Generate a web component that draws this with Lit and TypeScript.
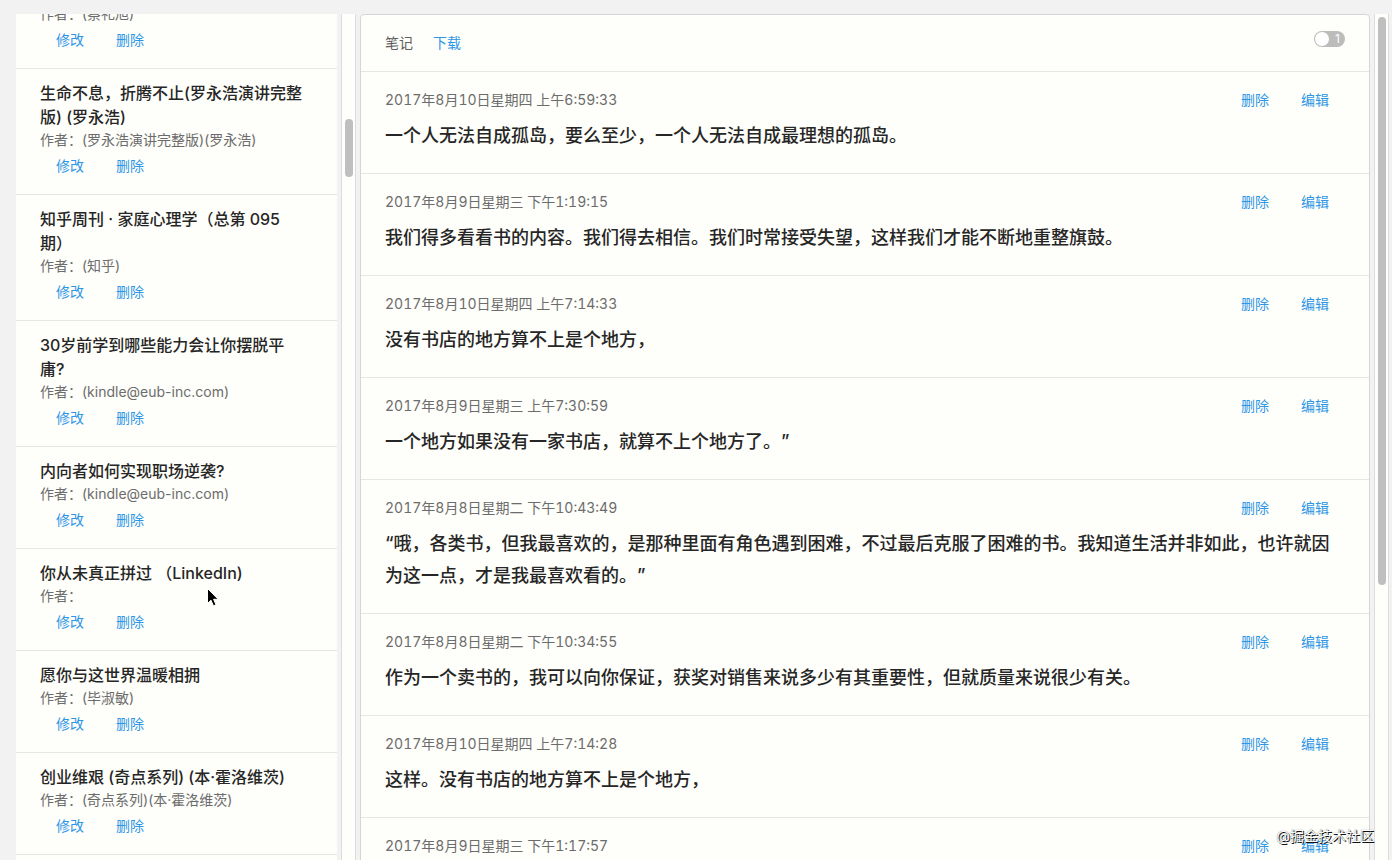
import { LitElement, html, css } from "lit";
import { customElement, property, query } from "lit/decorators.js";

interface Book {
  title: string;
  author: string;
}

interface Note {
  date: string;
  text: string;
}

const BOOKS: Book[] = [
  { title: "", author: "(蔡礼旭)" },
  { title: "生命不息，折腾不止(罗永浩演讲完整\n版) (罗永浩)", author: "(罗永浩演讲完整版)(罗永浩)" },
  { title: "知乎周刊 · 家庭心理学（总第 095\n期）", author: "(知乎)" },
  { title: "30岁前学到哪些能力会让你摆脱平\n庸?", author: "(kindle@eub-inc.com)" },
  { title: "内向者如何实现职场逆袭?", author: "(kindle@eub-inc.com)" },
  { title: "你从未真正拼过 （LinkedIn)", author: "" },
  { title: "愿你与这世界温暖相拥", author: "(毕淑敏)" },
  { title: "创业维艰 (奇点系列) (本·霍洛维茨)", author: "(奇点系列)(本·霍洛维茨)" },
];

const NOTES: Note[] = [
  { date: "2017年8月10日星期四 上午6:59:33", text: "一个人无法自成孤岛，要么至少，一个人无法自成最理想的孤岛。" },
  { date: "2017年8月9日星期三 下午1:19:15", text: "我们得多看看书的内容。我们得去相信。我们时常接受失望，这样我们才能不断地重整旗鼓。" },
  { date: "2017年8月10日星期四 上午7:14:33", text: "没有书店的地方算不上是个地方，" },
  { date: "2017年8月9日星期三 上午7:30:59", text: "一个地方如果没有一家书店，就算不上个地方了。”" },
  { date: "2017年8月8日星期二 下午10:43:49", text: "“哦，各类书，但我最喜欢的，是那种里面有角色遇到困难，不过最后克服了困难的书。我知道生活并非如此，也许就因为这一点，才是我最喜欢看的。”" },
  { date: "2017年8月8日星期二 下午10:34:55", text: "作为一个卖书的，我可以向你保证，获奖对销售来说多少有其重要性，但就质量来说很少有关。" },
  { date: "2017年8月10日星期四 上午7:14:28", text: "这样。没有书店的地方算不上是个地方，" },
  { date: "2017年8月9日星期三 下午1:17:57", text: "" },
];

const linkButton = css`
  button {
    height: 32px;
    padding: 0 16px;
    border: 0;
    background: none;
    color: #2e96e6;
    font: inherit;
    cursor: pointer;
  }
`;

@customElement("book-item")
class BookItem extends LitElement {
  @property({ attribute: false }) book!: Book;

  static styles = [
    linkButton,
    css`
      :host {
        display: block;
        padding: 12px 24px;
        border-bottom: 1px solid #e6e6e4;
      }
      .title {
        margin: 0;
        min-height: 24px;
        font-size: 16px;
        font-weight: 500;
        line-height: 24px;
        color: #262626;
        white-space: pre-line;
      }
      .author {
        margin: 0;
        line-height: 21px;
        color: #6c6c6c;
      }
      .actions {
        display: flex;
      }
    `,
  ];

  render() {
    return html`
      <h3 class="title">${this.book.title}</h3>
      <p class="author">作者：${this.book.author}</p>
      <div class="actions">
        <button type="button">修改</button>
        <button type="button">删除</button>
      </div>
    `;
  }
}

@customElement("note-item")
class NoteItem extends LitElement {
  @property({ attribute: false }) note!: Note;

  static styles = [
    linkButton,
    css`
      :host {
        display: block;
        padding: 12px 24px 21px;
        border-bottom: 1px solid #e6e6e4;
      }
      .meta {
        display: flex;
        align-items: center;
      }
      .date {
        flex: 1;
        color: #6c6c6c;
        font-variant-numeric: tabular-nums;
      }
      .text {
        margin: 4px 0 0;
        min-height: 32px;
        font-size: 18px;
        font-weight: 500;
        line-height: 32px;
        color: #262626;
      }
    `,
  ];

  render() {
    return html`
      <div class="meta">
        <time class="date">${this.note.date}</time>
        <button type="button">删除</button>
        <button type="button">编辑</button>
      </div>
      <p class="text">${this.note.text}</p>
    `;
  }
}

@customElement("app-root")
class AppRoot extends LitElement {
  @query(".books") books!: HTMLElement;

  static styles = [
    linkButton,
    css`
      :host {
        display: block;
        position: relative;
        height: 100vh;
        overflow: hidden;
        box-sizing: border-box;
        padding: 14px 3px 0 16px;
        background: #f2f2f3;
        color: #666;
        font: 14px/22px Inter, "Noto Sans CJK SC", sans-serif;
        text-spacing-trim: space-all;
      }
      .layout {
        display: flex;
        height: 100%;
      }
      .books,
      .notes {
        overflow-y: auto;
        scrollbar-width: none;
      }
      .books {
        flex: 0 0 321px;
        box-sizing: border-box;
        padding-bottom: 24px;
        background: #fefefa;
      }
      .notes {
        flex: 1;
        min-width: 0;
      }
      .panel {
        border: 1px solid #d6d6d8;
        border-radius: 4px;
        background: #fefefa;
      }
      .track {
        flex: 0 0 15px;
        box-sizing: border-box;
        margin: 0 4px;
        padding-left: 3px;
        border: solid #dcdce0;
        border-width: 0 1px;
        background: #fefefa;
      }
      .track.outer {
        margin-right: 0;
      }
      .thumb {
        width: 8px;
        border-radius: 4px;
        background: #bfbfbf;
      }
      .thumb.short {
        height: 58px;
        margin-top: 105px;
      }
      .thumb.long {
        height: 568px;
        margin-top: 3px;
      }
      .header {
        display: flex;
        height: 56px;
        align-items: center;
        padding: 0 24px;
        border-bottom: 1px solid #e6e6e4;
      }
      .heading {
        margin: 0;
        font: inherit;
        color: #606060;
      }
      .header button {
        margin-left: 4px;
      }
      .switch {
        display: flex;
        align-items: center;
        justify-content: space-between;
        box-sizing: border-box;
        width: 31px;
        height: 16px;
        margin: 0 0 8px auto;
        padding: 0 5px 0 1px;
        border-radius: 8px;
        background: #bcbcba;
        color: #fff;
        font-size: 12px;
      }
      .switch input {
        appearance: none;
        width: 14px;
        height: 14px;
        margin: 0;
        border-radius: 50%;
        background: #fff;
      }
      .cursor {
        position: absolute;
        left: 206px;
        top: 587px;
      }
      .watermark {
        position: absolute;
        right: 18px;
        bottom: 13px;
        color: #fff;
        font-size: 14px;
        text-shadow: 1px 1px 0 #111, 0 0 1px #555;
      }
    `,
  ];

  async firstUpdated() {
    const items = [...this.renderRoot.querySelectorAll<BookItem>("book-item")];
    await Promise.all(items.map((item) => item.updateComplete));
    this.books.scrollTop = 47;
  }

  render() {
    return html`
      <div class="layout">
        <nav class="books">
          ${BOOKS.map((book) => html`<book-item .book=${book}></book-item>`)}
        </nav>
        <div class="track"><div class="thumb short"></div></div>
        <main class="notes">
          <section class="panel">
            <header class="header">
              <h2 class="heading">笔记</h2>
              <button type="button">下载</button>
              <label class="switch"><input type="checkbox" role="switch" />1</label>
            </header>
            ${NOTES.map((note) => html`<note-item .note=${note}></note-item>`)}
          </section>
        </main>
        <div class="track outer"><div class="thumb long"></div></div>
      </div>
      <svg class="cursor" width="14" height="21" viewBox="0 0 14 21" aria-hidden="true">
        <path d="M1.5 1.5v15l3.5-3.3 2.4 5.6 2.6-1.1-2.4-5.4h4.6z" fill="#000" stroke="#fff" stroke-width="1" />
      </svg>
      <span class="watermark">@掘金技术社区</span>
    `;
  }
}
